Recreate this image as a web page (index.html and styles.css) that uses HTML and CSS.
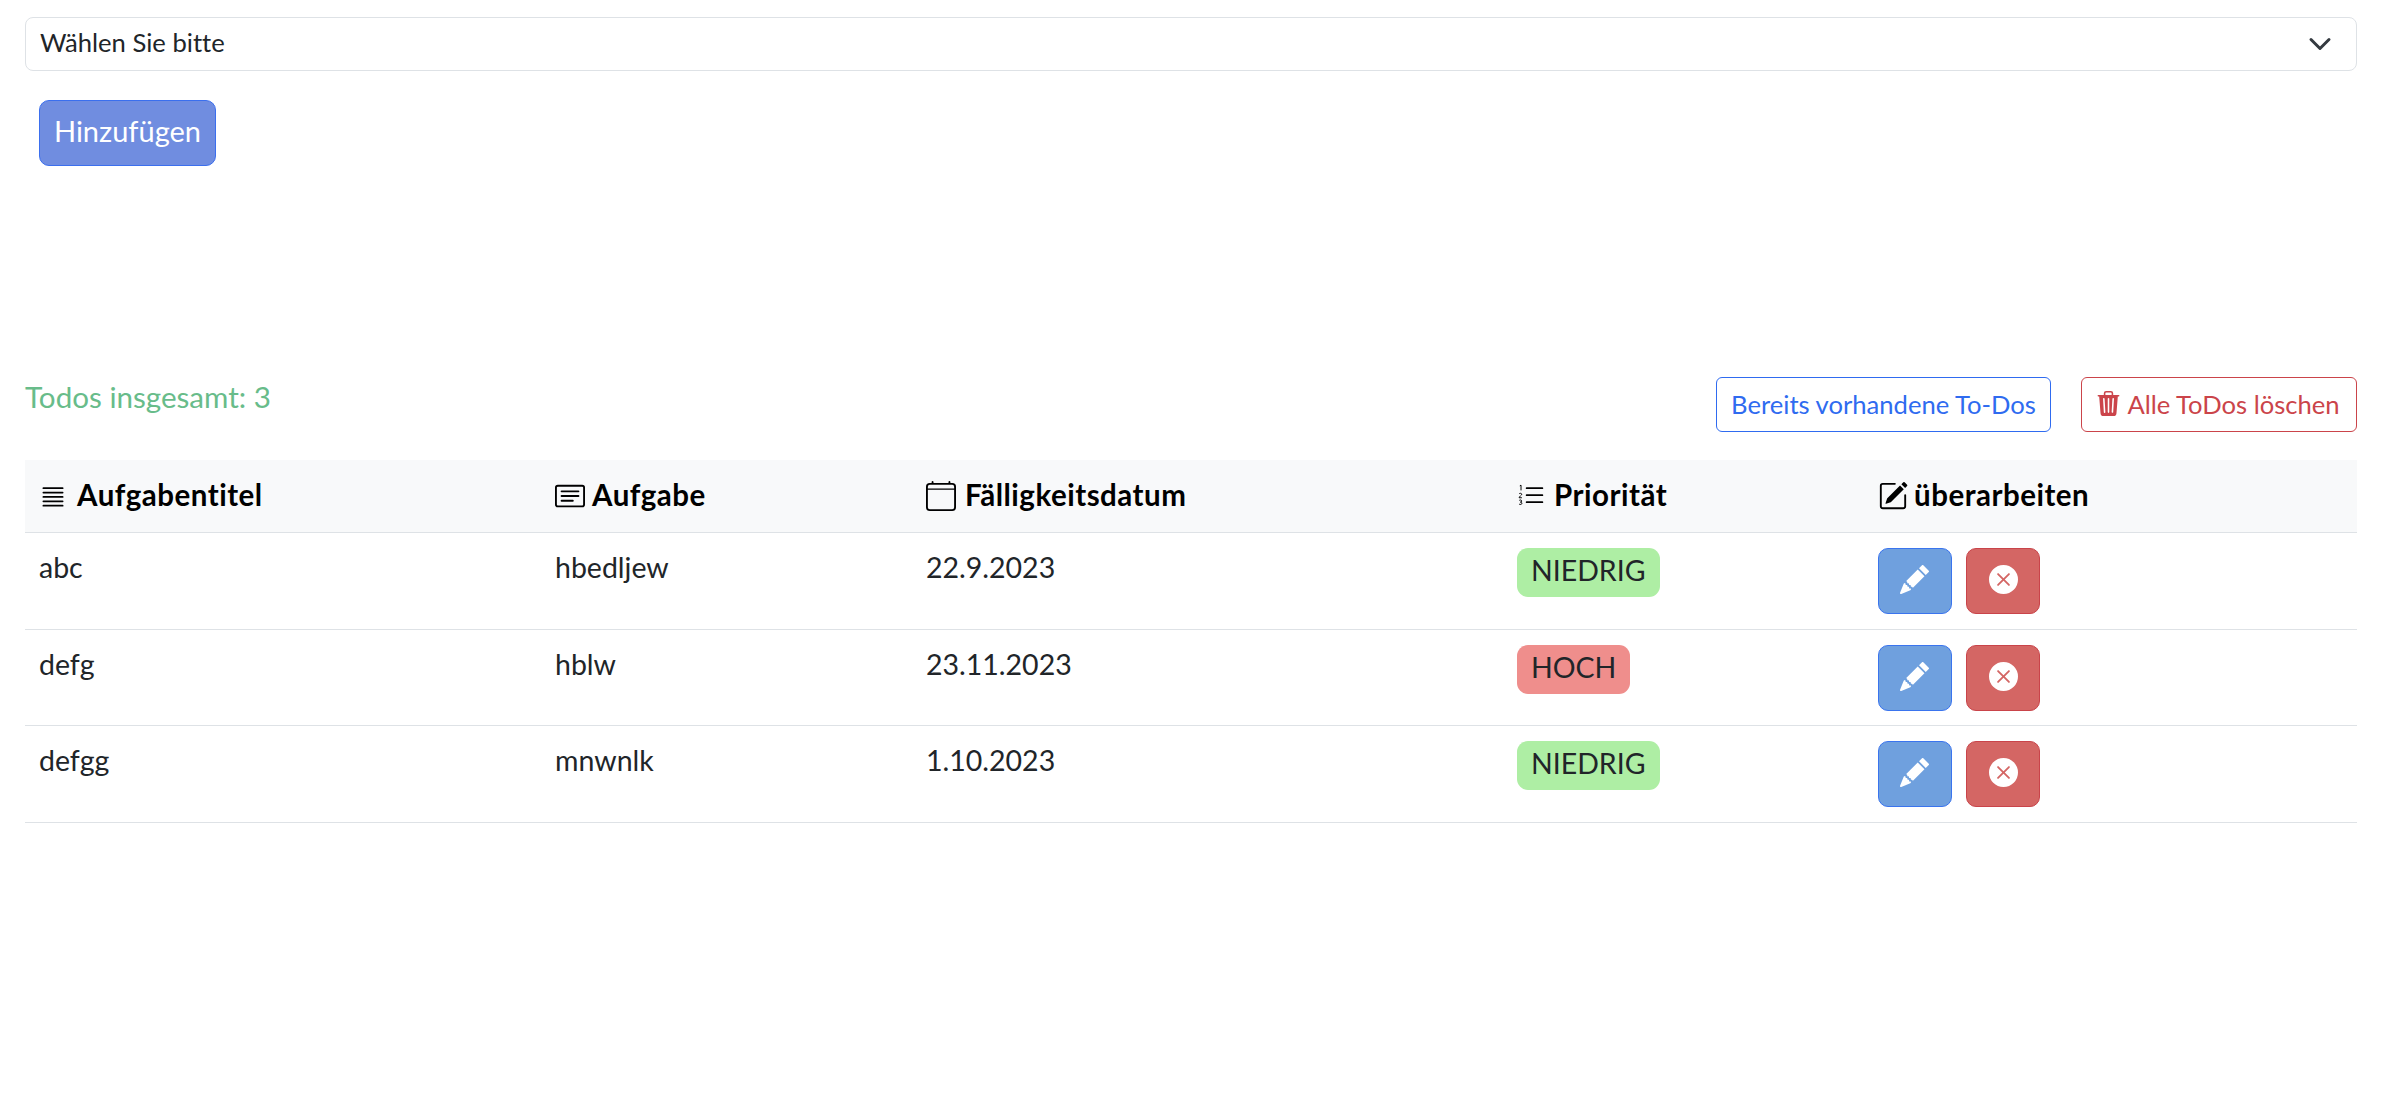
FILE: index.html
```html
<!DOCTYPE html>
<html lang="de">
<head>
<meta charset="utf-8">
<title>Todos</title>
<link rel="stylesheet" href="styles.css">
</head>
<body>
<main class="page">
  <div class="select">
    <span>Wählen Sie bitte</span>
    <svg class="chevron" viewBox="0 0 16 16"><path d="M2 5l6 6 6-6" fill="none" stroke="#343a40" stroke-width="2" stroke-linecap="round" stroke-linejoin="round"/></svg>
  </div>
  <div class="add-row"><button class="btn-add">Hinzufügen</button></div>
  <div class="toolbar">
    <div class="total">Todos insgesamt: 3</div>
    <div class="actions">
      <button class="btn-outline btn-blue">Bereits vorhandene To-Dos</button>
      <button class="btn-outline btn-red"><svg class="trash" viewBox="0 0 16 16" fill="currentColor"><path d="M11 1.5v1h3.5a.5.5 0 0 1 0 1h-.538l-.853 10.66A2 2 0 0 1 11.115 16h-6.23a2 2 0 0 1-1.994-1.84L2.038 3.5H1.5a.5.5 0 0 1 0-1H5v-1A1.5 1.5 0 0 1 6.5 0h3A1.5 1.5 0 0 1 11 1.5Zm-5 0v1h4v-1a.5.5 0 0 0-.5-.5h-3a.5.5 0 0 0-.5.5ZM4.5 5.029l.5 8.5a.5.5 0 1 0 .998-.06l-.5-8.5a.5.5 0 1 0-.998.06Zm6.53-.528a.5.5 0 0 0-.528.47l-.5 8.5a.5.5 0 0 0 .998.058l.5-8.5a.5.5 0 0 0-.47-.528ZM8 4.5a.5.5 0 0 0-.5.5v8.5a.5.5 0 0 0 1 0V5a.5.5 0 0 0-.5-.5Z"/></svg>Alle ToDos löschen</button>
    </div>
  </div>
  <table class="todos">
    <thead>
      <tr>
        <th class="c1"><span class="th"><svg class="ico" viewBox="0 0 16 16" fill="currentColor"><path d="M2 3.5a.5.5 0 0 1 .5-.5h11a.5.5 0 0 1 0 1h-11a.5.5 0 0 1-.5-.5zm0 2.5a.5.5 0 0 1 .5-.5h11a.5.5 0 0 1 0 1h-11A.5.5 0 0 1 2 6zm0 2.5a.5.5 0 0 1 .5-.5h11a.5.5 0 0 1 0 1h-11a.5.5 0 0 1-.5-.5zm0 2.5a.5.5 0 0 1 .5-.5h11a.5.5 0 0 1 0 1h-11A.5.5 0 0 1 2 11zm0 2.5a.5.5 0 0 1 .5-.5h11a.5.5 0 0 1 0 1h-11a.5.5 0 0 1-.5-.5z"/></svg>Aufgabentitel</span></th>
        <th class="c2"><span class="th"><svg class="ico" viewBox="0 0 16 16" fill="currentColor"><path d="M14.5 3a.5.5 0 0 1 .5.5v9a.5.5 0 0 1-.5.5h-13a.5.5 0 0 1-.5-.5v-9a.5.5 0 0 1 .5-.5h13zm-13-1A1.5 1.5 0 0 0 0 3.5v9A1.5 1.5 0 0 0 1.5 14h13a1.5 1.5 0 0 0 1.5-1.5v-9A1.5 1.5 0 0 0 14.5 2h-13z"/><path d="M3 5.5a.5.5 0 0 1 .5-.5h9a.5.5 0 0 1 0 1h-9a.5.5 0 0 1-.5-.5zM3 8a.5.5 0 0 1 .5-.5h9a.5.5 0 0 1 0 1h-9A.5.5 0 0 1 3 8zm0 2.5a.5.5 0 0 1 .5-.5h6a.5.5 0 0 1 0 1h-6a.5.5 0 0 1-.5-.5z"/></svg>Aufgabe</span></th>
        <th class="c3"><span class="th"><svg class="ico" viewBox="0 0 16 16" fill="currentColor"><path d="M3.5 0a.5.5 0 0 1 .5.5V1h8V.5a.5.5 0 0 1 1 0V1h1a2 2 0 0 1 2 2v11a2 2 0 0 1-2 2H2a2 2 0 0 1-2-2V3a2 2 0 0 1 2-2h1V.5a.5.5 0 0 1 .5-.5zM2 2a1 1 0 0 0-1 1v1h14V3a1 1 0 0 0-1-1H2zM1 4.6V14a1 1 0 0 0 1 1h12a1 1 0 0 0 1-1V4.6H1z" fill-rule="evenodd"/></svg>Fälligkeitsdatum</span></th>
        <th class="c4"><span class="th"><svg class="ico" viewBox="0 0 16 16" fill="currentColor"><path d="M5 11.5a.5.5 0 0 1 .5-.5h9a.5.5 0 0 1 0 1h-9a.5.5 0 0 1-.5-.5zm0-4a.5.5 0 0 1 .5-.5h9a.5.5 0 0 1 0 1h-9a.5.5 0 0 1-.5-.5zm0-4a.5.5 0 0 1 .5-.5h9a.5.5 0 0 1 0 1h-9a.5.5 0 0 1-.5-.5z"/><path d="M1.6 2.2l.7-.4v3M1.2 6.8c.3-.5 1.4-.5 1.5.2 0 .6-1.4 1.2-1.5 2h1.6M1.3 10.5c.4-.4 1.4-.3 1.4.4 0 .4-.4.6-.8.6.5 0 .9.2.9.7 0 .7-1.1.8-1.6.4" fill="none" stroke="currentColor" stroke-width=".55"/></svg>Priorität</span></th>
        <th class="c5"><span class="th"><svg class="ico" viewBox="0 0 16 16" fill="currentColor"><path d="M15.502 1.94a.5.5 0 0 1 0 .706L14.459 3.69l-2-2L13.502.646a.5.5 0 0 1 .707 0l1.293 1.293zm-1.75 2.456-2-2L4.939 9.21a.5.5 0 0 0-.121.196l-.805 2.414a.25.25 0 0 0 .316.316l2.414-.805a.5.5 0 0 0 .196-.12l6.813-6.814z"/><path d="M1 13.5A1.5 1.5 0 0 0 2.5 15h11a1.5 1.5 0 0 0 1.5-1.5v-6a.5.5 0 0 0-1 0v6a.5.5 0 0 1-.5.5h-11a.5.5 0 0 1-.5-.5v-11a.5.5 0 0 1 .5-.5H9a.5.5 0 0 0 0-1H2.5A1.5 1.5 0 0 0 1 2.5v11z"/></svg>überarbeiten</span></th>
      </tr>
    </thead>
    <tbody>
      <tr>
        <td>abc</td><td>hbedljew</td><td>22.9.2023</td>
        <td><span class="badge badge-low">NIEDRIG</span></td>
        <td><div class="row-btns">
          <button class="icon-btn edit"><svg viewBox="0 0 16 16" fill="currentColor"><path d="M12.854.146a.5.5 0 0 0-.707 0L10.5 1.793 14.207 5.5l1.647-1.646a.5.5 0 0 0 0-.708l-3-3zm.646 6.061L9.793 2.5 3.293 9H3.5a.5.5 0 0 1 .5.5v.5h.5a.5.5 0 0 1 .5.5v.5h.5a.5.5 0 0 1 .5.5v.5h.5a.5.5 0 0 1 .5.5v.207l6.5-6.5zm-7.468 7.468A.5.5 0 0 1 6 13.5V13h-.5a.5.5 0 0 1-.5-.5V12h-.5a.5.5 0 0 1-.5-.5V11h-.5a.5.5 0 0 1-.5-.5V10h-.5a.499.499 0 0 1-.175-.032l-.179.178a.5.5 0 0 0-.11.168l-2 5a.5.5 0 0 0 .65.65l5-2a.5.5 0 0 0 .168-.11l.178-.178z"/></svg></button>
          <button class="icon-btn del"><svg viewBox="0 0 16 16" fill="currentColor"><path d="M16 8A8 8 0 1 1 0 8a8 8 0 0 1 16 0zM5.354 4.646a.5.5 0 1 0-.708.708L7.293 8l-2.647 2.646a.5.5 0 0 0 .708.708L8 8.707l2.646 2.647a.5.5 0 0 0 .708-.708L8.707 8l2.647-2.646a.5.5 0 0 0-.708-.708L8 7.293 5.354 4.646z"/></svg></button>
        </div></td>
      </tr>
      <tr>
        <td>defg</td><td>hblw</td><td>23.11.2023</td>
        <td><span class="badge badge-high">HOCH</span></td>
        <td><div class="row-btns">
          <button class="icon-btn edit"><svg viewBox="0 0 16 16" fill="currentColor"><path d="M12.854.146a.5.5 0 0 0-.707 0L10.5 1.793 14.207 5.5l1.647-1.646a.5.5 0 0 0 0-.708l-3-3zm.646 6.061L9.793 2.5 3.293 9H3.5a.5.5 0 0 1 .5.5v.5h.5a.5.5 0 0 1 .5.5v.5h.5a.5.5 0 0 1 .5.5v.5h.5a.5.5 0 0 1 .5.5v.207l6.5-6.5zm-7.468 7.468A.5.5 0 0 1 6 13.5V13h-.5a.5.5 0 0 1-.5-.5V12h-.5a.5.5 0 0 1-.5-.5V11h-.5a.5.5 0 0 1-.5-.5V10h-.5a.499.499 0 0 1-.175-.032l-.179.178a.5.5 0 0 0-.11.168l-2 5a.5.5 0 0 0 .65.65l5-2a.5.5 0 0 0 .168-.11l.178-.178z"/></svg></button>
          <button class="icon-btn del"><svg viewBox="0 0 16 16" fill="currentColor"><path d="M16 8A8 8 0 1 1 0 8a8 8 0 0 1 16 0zM5.354 4.646a.5.5 0 1 0-.708.708L7.293 8l-2.647 2.646a.5.5 0 0 0 .708.708L8 8.707l2.646 2.647a.5.5 0 0 0 .708-.708L8.707 8l2.647-2.646a.5.5 0 0 0-.708-.708L8 7.293 5.354 4.646z"/></svg></button>
        </div></td>
      </tr>
      <tr>
        <td>defgg</td><td>mnwnlk</td><td>1.10.2023</td>
        <td><span class="badge badge-low">NIEDRIG</span></td>
        <td><div class="row-btns">
          <button class="icon-btn edit"><svg viewBox="0 0 16 16" fill="currentColor"><path d="M12.854.146a.5.5 0 0 0-.707 0L10.5 1.793 14.207 5.5l1.647-1.646a.5.5 0 0 0 0-.708l-3-3zm.646 6.061L9.793 2.5 3.293 9H3.5a.5.5 0 0 1 .5.5v.5h.5a.5.5 0 0 1 .5.5v.5h.5a.5.5 0 0 1 .5.5v.5h.5a.5.5 0 0 1 .5.5v.207l6.5-6.5zm-7.468 7.468A.5.5 0 0 1 6 13.5V13h-.5a.5.5 0 0 1-.5-.5V12h-.5a.5.5 0 0 1-.5-.5V11h-.5a.5.5 0 0 1-.5-.5V10h-.5a.499.499 0 0 1-.175-.032l-.179.178a.5.5 0 0 0-.11.168l-2 5a.5.5 0 0 0 .65.65l5-2a.5.5 0 0 0 .168-.11l.178-.178z"/></svg></button>
          <button class="icon-btn del"><svg viewBox="0 0 16 16" fill="currentColor"><path d="M16 8A8 8 0 1 1 0 8a8 8 0 0 1 16 0zM5.354 4.646a.5.5 0 1 0-.708.708L7.293 8l-2.647 2.646a.5.5 0 0 0 .708.708L8 8.707l2.646 2.647a.5.5 0 0 0 .708-.708L8.707 8l2.647-2.646a.5.5 0 0 0-.708-.708L8 7.293 5.354 4.646z"/></svg></button>
        </div></td>
      </tr>
    </tbody>
  </table>
</main>
</body>
</html>
```
FILE: styles.css
```css
* { box-sizing: border-box; }
html, body { margin: 0; background: #fff; }
body {
  font-family: "Lato", "Noto Sans", sans-serif; color: #212529; font-size: 25px;
  font-variant-ligatures: none;
}
.page { padding: 17px 45px 0 25px; }
button { font-family: inherit; font-variant-ligatures: none; cursor: pointer; }

.select {
  height: 54px; border: 1.5px solid #dee2e6; border-radius: 8px;
  display: flex; align-items: center; justify-content: space-between;
  padding: 0 24px 5px 14px; font-size: 25.6px; color: #212529;
}
.chevron { width: 24px; height: 24px; margin-top: 5px; }

.add-row { padding: 29px 0 0 14px; }
.btn-add {
  width: 177px; height: 66px; border: 1.5px solid #3b6fee; border-radius: 10px;
  background: #708de0; color: #fff; font-size: 29px; padding: 0 0 5px;
}

.toolbar {
  margin-top: 211px; display: flex; justify-content: space-between; align-items: flex-start;
}
.total { color: #68bc8a; font-size: 29.6px; line-height: 34px; padding-top: 3px; }
.actions { display: flex; gap: 30px; }
.btn-outline {
  height: 55px; background: #fff; border-radius: 6px; font-size: 25.6px; padding: 0 0 2px;
  display: flex; align-items: center; justify-content: center; border: 1.5px solid;
}
.btn-blue { width: 335px; color: #2f6bf0; border-color: #2f6bf0; }
.btn-red { width: 276px; color: #cb444a; border-color: #cb444a; gap: 6px; padding-right: 2px; }
.trash { width: 25px; height: 25px; }

.todos {
  width: 100%; margin-top: 28px; border-collapse: collapse; table-layout: fixed;
}
.c1 { width: 516px; }
.c2 { width: 371px; }
.c3 { width: 591px; }
.c4 { width: 361px; }
.c5 { width: 493px; }
thead tr { background: #f8f9fa; }
th {
  height: 72px; padding: 0 14px 3px; text-align: left; color: #000; font-weight: 700;
  font-size: 29.5px; letter-spacing: .5px; border-bottom: 1.5px solid #dee2e6;
}
.th { display: flex; align-items: center; gap: 6px; }
.ico { width: 30px; height: 30px; flex: none; margin-top: 3px; }
.c1 .ico, .c4 .ico { width: 28px; }
.c1 .th { gap: 10px; }
.c2 .th { gap: 7px; }
.c3 .th, .c4 .th { gap: 9px; }
td {
  padding: 15px 14px 10px; vertical-align: top; border-bottom: 1.5px solid #dee2e6;
  font-size: 28.5px; line-height: 38px; height: 97px; color: #212529;
}
tbody tr:nth-child(2) td { height: 96px; }
.badge {
  display: inline-block; height: 49px; line-height: 45px; padding: 0 14px; border-radius: 11px;
  font-size: 28.5px;
}
.badge-low { background: #aeeea4; }
.badge-high { background: #ef8e8c; }
.row-btns { display: flex; gap: 14px; }
.icon-btn {
  width: 74px; height: 66px; border-radius: 10px; border: 1.5px solid; padding: 0 0 3px; color: #fff;
  display: flex; align-items: center; justify-content: center;
}
.icon-btn svg { width: 29px; height: 29px; }
.edit { background: #6fa0de; border-color: #3a74ee; padding-right: 2px; }
.del { background: #d46664; border-color: #c9444a; }
```
